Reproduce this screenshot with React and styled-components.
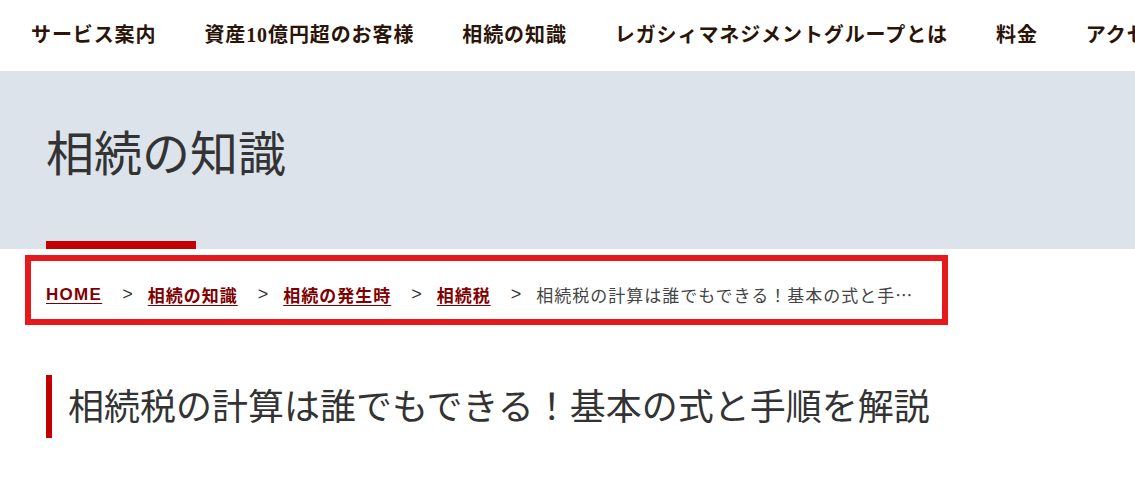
import React from 'react';
import styled, { createGlobalStyle } from 'styled-components';

const GlobalStyle = createGlobalStyle`
  html, body {
    margin: 0;
    padding: 0;
    background: #ffffff;
    overflow: hidden;
  }
  body {
    font-family: "Noto Sans CJK JP", "Noto Sans", sans-serif;
    color: #333333;
  }
`;

const Page = styled.div`
  width: 1135px;
  height: 499px;
  overflow: hidden;
`;

const Nav = styled.nav`
  height: 71px;
  display: flex;
  align-items: center;
  gap: 48px;
  padding: 0 0 5px 31px;
  box-sizing: border-box;
  white-space: nowrap;
  overflow: hidden;
`;

const NavItem = styled.a`
  font-family: "Liberation Serif", "Noto Sans CJK JP", serif;
  font-weight: 700;
  font-size: 20px;
  letter-spacing: 0.9px;
  color: #2b1408;
  text-decoration: none;
  flex-shrink: 0;
`;

const Hero = styled.header`
  height: 178px;
  background: #dce3ea;
  display: flex;
  flex-direction: column;
  justify-content: space-between;
  padding: 0 0 0 46px;
  box-sizing: border-box;
`;

const HeroTitle = styled.h1`
  margin: 48px 0 0;
  font-size: 48px;
  font-weight: 400;
  line-height: 62px;
  color: #333333;
`;

const HeroBar = styled.div`
  width: 150px;
  height: 8px;
  background: #c20000;
`;

const Crumbs = styled.ol`
  list-style: none;
  margin: 6px 0 0 25px;
  width: 923px;
  height: 70px;
  box-sizing: border-box;
  border: 6px solid #e8191c;
  padding: 9px 29px 0 15px;
  display: flex;
  align-items: center;
  font-size: 17px;
  white-space: nowrap;
`;

const Crumb = styled.li`
  display: flex;
  align-items: center;
  flex-shrink: ${(p) => (p.$current ? 1 : 0)};
  min-width: 0;
  color: #444444;
  letter-spacing: 1px;

  &:not(:first-child)::before {
    content: '>';
    font-family: "Liberation Sans", sans-serif;
    font-size: 18px;
    color: #333333;
    letter-spacing: 0;
    padding: 0 15px 0 20px;
    flex-shrink: 0;
  }
`;

const CrumbLink = styled.a`
  color: #800000;
  font-weight: 700;
  text-decoration: underline;
  text-underline-offset: 3px;
  font-family: ${(p) => (p.$latin ? '"Liberation Sans", sans-serif' : 'inherit')};
  letter-spacing: ${(p) => (p.$latin ? '1.3px' : 'inherit')};
`;

const CrumbText = styled.span`
  overflow: hidden;
  text-overflow: ellipsis;
  min-width: 0;
`;

const ArticleTitle = styled.h2`
  margin: 50px 0 0 46px;
  border-left: 6px solid #c20000;
  padding: 0 0 6px 16px;
  height: 63px;
  box-sizing: border-box;
  display: flex;
  align-items: center;
  font-size: 36px;
  font-weight: 400;
  color: #333333;
  white-space: nowrap;
`;

const navItems = [
  'サービス案内',
  '資産10億円超のお客様',
  '相続の知識',
  'レガシィマネジメントグループとは',
  '料金',
  'アクセス',
];

const crumbs = [
  { label: 'HOME', latin: true },
  { label: '相続の知識' },
  { label: '相続の発生時' },
  { label: '相続税' },
];

export default function App() {
  return (
    <Page>
      <GlobalStyle />
      <Nav>
        {navItems.map((item) => (
          <NavItem key={item} href="#">
            {item}
          </NavItem>
        ))}
      </Nav>
      <Hero>
        <HeroTitle>相続の知識</HeroTitle>
        <HeroBar />
      </Hero>
      <Crumbs>
        {crumbs.map((c) => (
          <Crumb key={c.label}>
            <CrumbLink href="#" $latin={c.latin}>
              {c.label}
            </CrumbLink>
          </Crumb>
        ))}
        <Crumb $current>
          <CrumbText>相続税の計算は誰でもできる！基本の式と手順を解説</CrumbText>
        </Crumb>
      </Crumbs>
      <ArticleTitle>相続税の計算は誰でもできる！基本の式と手順を解説</ArticleTitle>
    </Page>
  );
}
